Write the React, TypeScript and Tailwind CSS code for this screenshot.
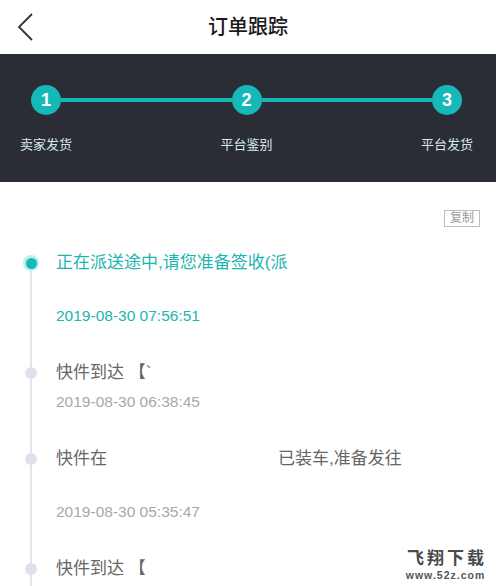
import React from "react";

const font = { fontFamily: '"Liberation Sans", "Noto Sans CJK SC", sans-serif' };

function Step({ n }: { n: number }) {
  return (
    <div className="w-[30px] h-[30px] rounded-full bg-[#17b8b8] flex items-center justify-center text-white text-[18px] font-semibold shrink-0">
      {n}
    </div>
  );
}

type Item = {
  active?: boolean;
  first?: boolean;
  lines: React.ReactNode[];
  date?: string;
};

const items: Item[] = [
  {
    active: true,
    first: true,
    lines: ["正在派送途中,请您准备签收(派", ""],
    date: "2019-08-30 07:56:51",
  },
  { lines: ["快件到达 【`"], date: "2019-08-30 06:38:45" },
  {
    lines: [
      <span key="a">
        快件在<span className="inline-block w-[171px]"></span>已装车,准备发往
      </span>,
      "",
    ],
    date: "2019-08-30 05:35:47",
  },
  { lines: ["快件到达 【"] },
];

export default function App() {
  return (
    <div className="relative w-[496px] h-[586px] overflow-hidden bg-white" style={font}>
      {/* header */}
      <div className="h-[54px] flex items-center relative">
        <div className="w-[54px] flex items-center pl-[17px]">
          <svg width="18" height="28" viewBox="0 0 18 28" fill="none">
            <polyline points="15,1 2,14 15,27" stroke="#333" strokeWidth="1.8" strokeLinejoin="miter" />
          </svg>
        </div>
        <div className="flex-1 text-center text-[20px] text-[#1a1a1a] font-medium pr-[54px]">订单跟踪</div>
      </div>

      {/* stepper */}
      <div className="h-[128px] bg-[#2a2d36] pt-[31px]">
        <div className="flex items-center pl-[31px] pr-[34px]">
          <Step n={1} />
          <div className="flex-1 h-[4px] bg-[#17b8b8]" />
          <Step n={2} />
          <div className="flex-1 h-[4px] bg-[#17b8b8]" />
          <Step n={3} />
        </div>
        <div className="flex justify-between pl-[20px] pr-[23px] mt-[21px] text-[13px] text-[#d8e8ea] leading-[18px]">
          <span>卖家发货</span>
          <span>平台鉴别</span>
          <span>平台发货</span>
        </div>
      </div>

      {/* copy */}
      <div className="flex justify-end pr-[16px] pt-[28px]">
        <div className="border border-[#bdbdbd] text-[#999] text-[12px] leading-[15px] px-[5px]">复制</div>
      </div>

      {/* timeline */}
      <div className="pl-[22px] pt-[24px]">
        {items.map((it, i) => (
          <div key={i} className="flex">
            <div className="w-[18px] flex flex-col items-center">
              <div className={`h-[4px] w-[2px] ${it.first ? "" : "bg-[#e4e4ee]"}`} />
              {it.active ? (
                <div className="w-[16px] h-[16px] rounded-full bg-[#bdefee] flex items-center justify-center">
                  <div className="w-[11px] h-[11px] rounded-full bg-[#17b8b8]" />
                </div>
              ) : (
                <div className="w-[16px] h-[16px] flex items-center justify-center relative">
                  <div className="absolute top-0 bottom-0 w-[2px] bg-[#e4e4ee]" />
                  <div className="relative w-[12px] h-[12px] rounded-full bg-[#e0e0ec]" />
                </div>
              )}
              <div className="flex-1 w-[2px] bg-[#e4e4ee]" />
            </div>
            <div className="pl-[16px] pb-[33px]">
              {it.lines.map((l, j) => (
                <div
                  key={j}
                  className={`h-[24px] leading-[24px] text-[17px] ${it.active ? "text-[#1cb5b2]" : "text-[#666]"}`}
                >
                  {l}
                </div>
              ))}
              {it.date && (
                <div
                  className={`mt-[5px] leading-[24px] text-[15.5px] ${it.active ? "text-[#1cb5b2]" : "text-[#a8a8a8]"}`}
                >
                  {it.date}
                </div>
              )}
            </div>
          </div>
        ))}
      </div>

      {/* watermark */}
      <div className="absolute left-[404px] top-[550px] flex flex-col items-center">
        <div className="text-[17px] leading-[17px] font-bold text-[#4a4a4a] tracking-[3px] pl-[3px]">飞翔下载</div>
        <div className="text-[10.5px] leading-[12px] font-bold text-[#555] tracking-[1px] mt-[2px]">www.52z.com</div>
      </div>
    </div>
  );
}
